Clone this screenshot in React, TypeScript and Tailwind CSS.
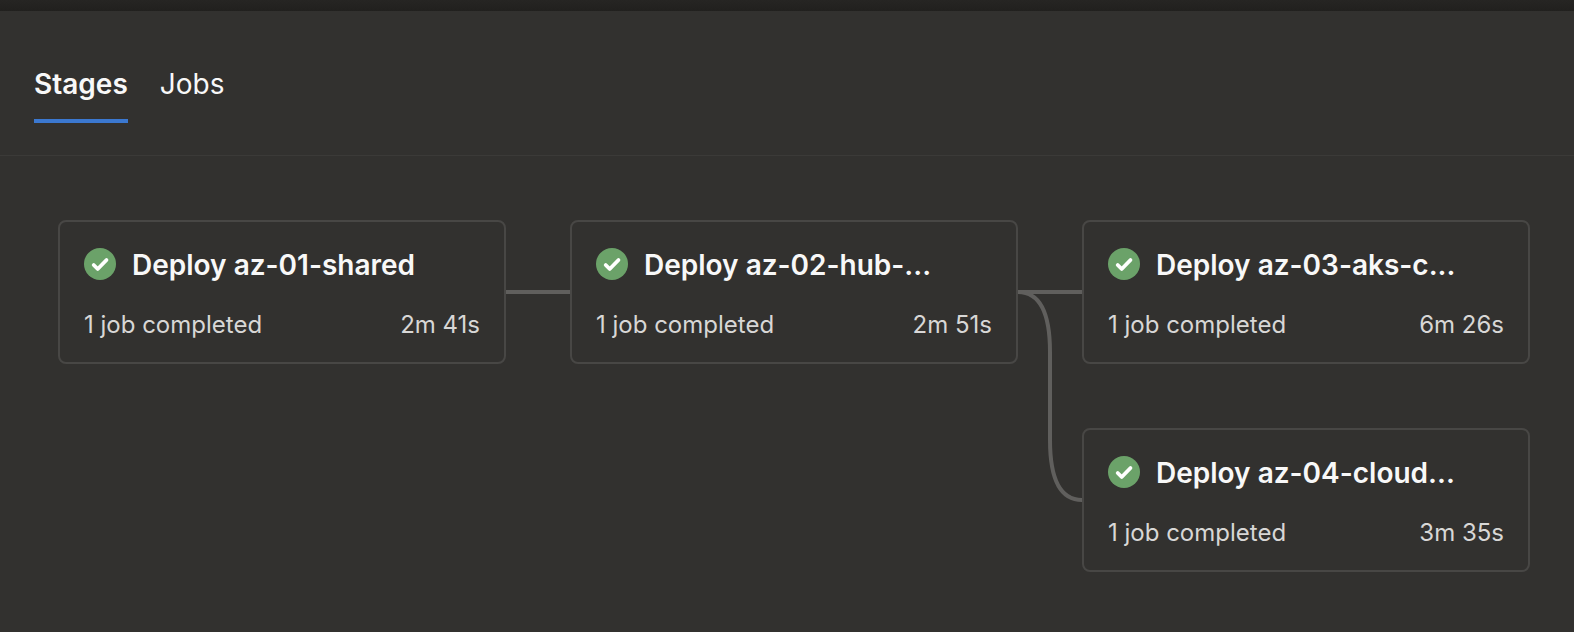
type Stage = {
  name: string;
  summary: string;
  duration: string;
  placement: string;
};

const stages: Stage[] = [
  { name: "Deploy az-01-shared", summary: "1 job completed", duration: "2m 41s", placement: "col-start-1 row-start-1" },
  { name: "Deploy az-02-hub-...", summary: "1 job completed", duration: "2m 51s", placement: "col-start-3 row-start-1" },
  { name: "Deploy az-03-aks-c...", summary: "1 job completed", duration: "6m 26s", placement: "col-start-5 row-start-1" },
  { name: "Deploy az-04-cloud...", summary: "1 job completed", duration: "3m 35s", placement: "col-start-5 row-start-2" },
];

function SuccessIcon() {
  return (
    <svg viewBox="0 0 32 32" className="mt-0.5 size-8 shrink-0" role="img" aria-label="Success">
      <circle cx="16" cy="16" r="16" fill="#6ba269" />
      <path
        d="M9.7 17 L13.7 21 L22.5 12"
        fill="none"
        stroke="#ffffff"
        strokeWidth="3.8"
        strokeLinecap="round"
        strokeLinejoin="round"
      />
    </svg>
  );
}

function StageCard({ stage }: { stage: Stage }) {
  return (
    <article
      className={`flex h-36 min-w-0 flex-col justify-between rounded-lg border-2 border-[#484745] px-6 pt-6 pb-[21px] ${stage.placement}`}
    >
      <div className="flex items-start gap-4">
        <SuccessIcon />
        <h2 className="truncate text-[28px] leading-[38px] font-semibold text-[#f8f8f8]">{stage.name}</h2>
      </div>
      <div className="flex items-center justify-between text-2xl leading-8 text-[#d8d7d6]">
        <span>{stage.summary}</span>
        <span>{stage.duration}</span>
      </div>
    </article>
  );
}

export default function App() {
  return (
    <div className="min-h-screen bg-[#32312f] font-['Inter','Liberation_Sans',sans-serif]">
      <div className="h-[11px] bg-linear-to-b from-[#262523] to-[#21201e]" />
      <nav className="flex gap-8 border-b border-[#3b3a38] px-[34px] pt-12 pb-8" role="tablist">
        <button
          type="button"
          role="tab"
          aria-selected="true"
          className="border-b-4 border-[#3b78d0] pt-[7px] pb-[17px] text-[28px] leading-9 font-semibold text-[#f8f8f8]"
        >
          Stages
        </button>
        <button
          type="button"
          role="tab"
          aria-selected="false"
          className="border-b-4 border-transparent pt-[7px] pb-[17px] text-[28px] leading-9 text-[#f8f8f8]"
        >
          Jobs
        </button>
      </nav>
      <main className="grid grid-cols-[1fr_64px_1fr_64px_1fr] gap-y-16 pt-16 pr-11 pb-15 pl-[58px]">
        {stages.map((stage) => (
          <StageCard key={stage.name} stage={stage} />
        ))}
        <svg viewBox="0 0 64 144" className="col-start-2 row-start-1 h-36 w-16" aria-hidden="true">
          <path d="M0 72 H64" fill="none" stroke="#605f5d" strokeWidth="4" />
        </svg>
        <svg viewBox="0 0 64 352" className="col-start-4 row-span-2 row-start-1 h-88 w-16" aria-hidden="true">
          <path
            d="M0 72 H64 M0 72 C22 72 32 94 32 132 V220 C32 258 42 280 64 280"
            fill="none"
            stroke="#605f5d"
            strokeWidth="4"
          />
        </svg>
      </main>
    </div>
  );
}
